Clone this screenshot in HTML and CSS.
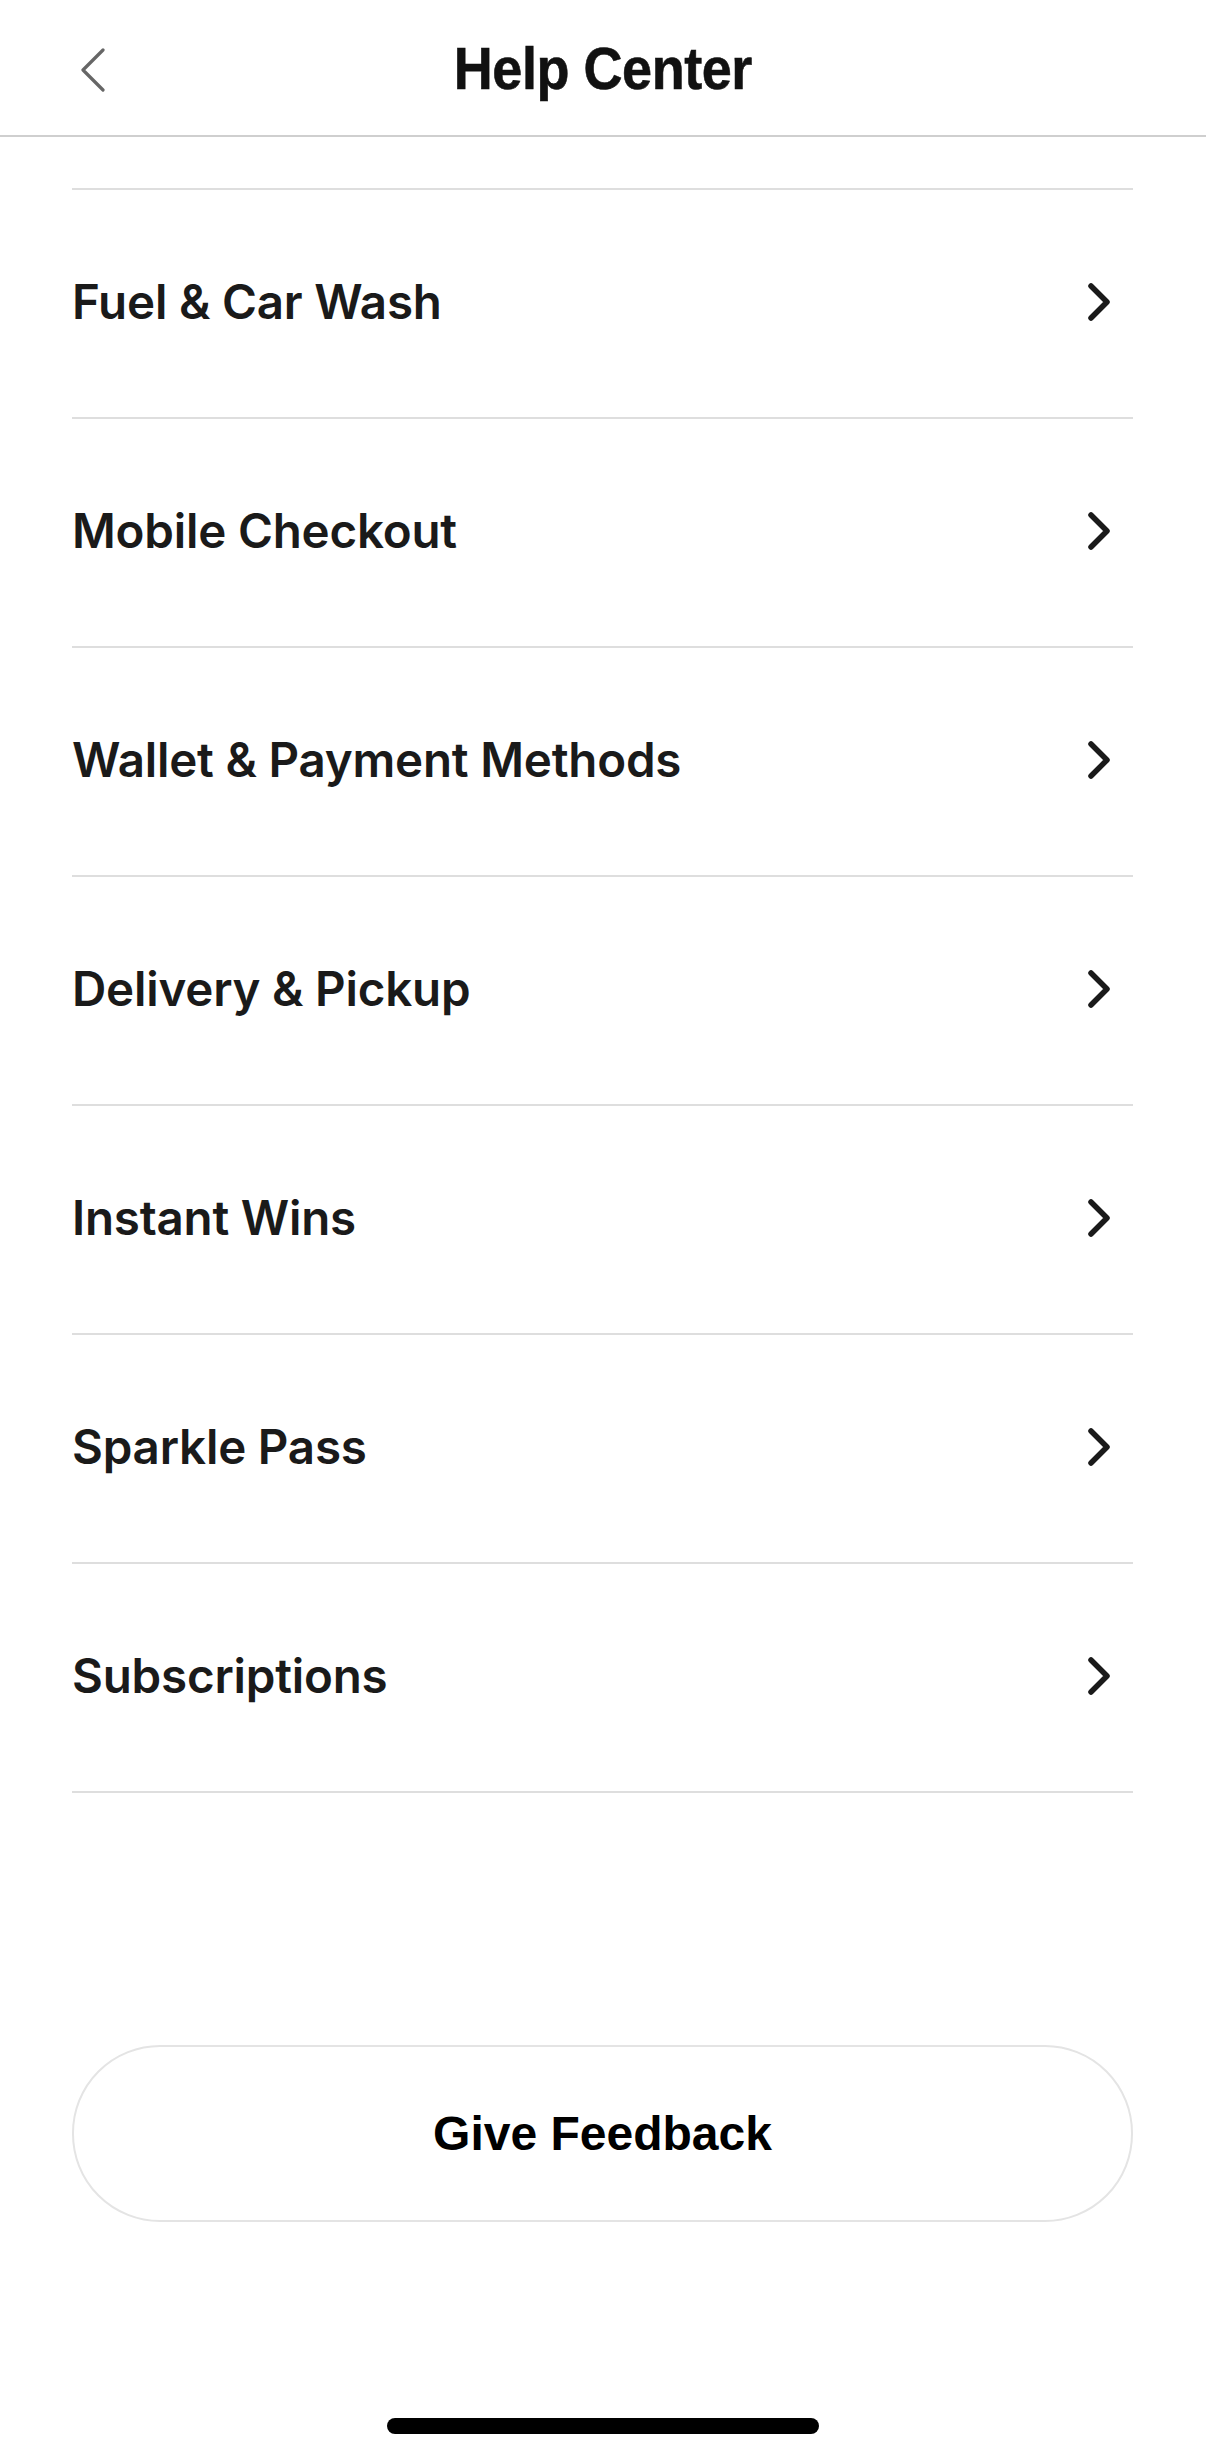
FILE: index.html
```html
<!DOCTYPE html>
<html lang="en">
<head>
<meta charset="utf-8">
<title>Help Center</title>
<link rel="stylesheet" href="styles.css">
</head>
<body>
<div class="screen">
  <header class="topbar">
    <button class="back" aria-label="Back">
      <svg width="26" height="44" viewBox="0 0 26 44"><polyline points="23,2 3,22 23,42" fill="none" stroke="#666" stroke-width="3.2" stroke-linecap="round" stroke-linejoin="round"/></svg>
    </button>
    <h1 class="title"><span>Help Center</span></h1>
    <div class="spacer"></div>
  </header>

  <ul class="list">
    <li class="row"><span class="label">Fuel &amp; Car Wash</span><svg class="chev" width="24" height="40" viewBox="0 0 24 40"><polyline points="4,4 20,20 4,36" fill="none" stroke="#1a1a1a" stroke-width="5.5" stroke-linecap="round" stroke-linejoin="round"/></svg></li>
    <li class="row"><span class="label">Mobile Checkout</span><svg class="chev" width="24" height="40" viewBox="0 0 24 40"><polyline points="4,4 20,20 4,36" fill="none" stroke="#1a1a1a" stroke-width="5.5" stroke-linecap="round" stroke-linejoin="round"/></svg></li>
    <li class="row"><span class="label">Wallet &amp; Payment Methods</span><svg class="chev" width="24" height="40" viewBox="0 0 24 40"><polyline points="4,4 20,20 4,36" fill="none" stroke="#1a1a1a" stroke-width="5.5" stroke-linecap="round" stroke-linejoin="round"/></svg></li>
    <li class="row"><span class="label">Delivery &amp; Pickup</span><svg class="chev" width="24" height="40" viewBox="0 0 24 40"><polyline points="4,4 20,20 4,36" fill="none" stroke="#1a1a1a" stroke-width="5.5" stroke-linecap="round" stroke-linejoin="round"/></svg></li>
    <li class="row"><span class="label">Instant Wins</span><svg class="chev" width="24" height="40" viewBox="0 0 24 40"><polyline points="4,4 20,20 4,36" fill="none" stroke="#1a1a1a" stroke-width="5.5" stroke-linecap="round" stroke-linejoin="round"/></svg></li>
    <li class="row"><span class="label">Sparkle Pass</span><svg class="chev" width="24" height="40" viewBox="0 0 24 40"><polyline points="4,4 20,20 4,36" fill="none" stroke="#1a1a1a" stroke-width="5.5" stroke-linecap="round" stroke-linejoin="round"/></svg></li>
    <li class="row"><span class="label">Subscriptions</span><svg class="chev" width="24" height="40" viewBox="0 0 24 40"><polyline points="4,4 20,20 4,36" fill="none" stroke="#1a1a1a" stroke-width="5.5" stroke-linecap="round" stroke-linejoin="round"/></svg></li>
  </ul>

  <div class="actions">
    <button class="feedback">Give Feedback</button>
  </div>

  <div class="home-bar"><div class="home-indicator"></div></div>
</div>
</body>
</html>
```

FILE: styles.css
```css
* { box-sizing: border-box; }
html, body {
  margin: 0;
  padding: 0;
  background: #ffffff;
}
.screen {
  width: 1206px;
  height: 2458px;
  display: flex;
  flex-direction: column;
  background: #ffffff;
  color: #1a1a1a;
  font-family: "Inter", "Liberation Sans", sans-serif;
}
.topbar {
  height: 137px;
  flex: none;
  display: grid;
  grid-template-columns: 1fr auto 1fr;
  align-items: center;
  border-bottom: 2px solid #cfcfcf;
  padding: 0 80px;
}
.back {
  justify-self: start;
  background: none;
  border: 0;
  padding: 0;
  margin-top: 5px;
  display: flex;
}
.title {
  margin: 0;
  font-family: "Liberation Sans", Arial, sans-serif;
  font-weight: 700;
  font-size: 59px;
  line-height: 1;
  color: #111;
  margin-top: 4px;
}
.title span {
  display: inline-block;
  transform: scaleX(0.915);
  letter-spacing: -0.5px;
  -webkit-text-stroke: 0.6px #111;
}
.list {
  list-style: none;
  margin: 51px 73px 0 72px;
  padding: 0;
  flex: none;
}
.row {
  height: 229px;
  border-top: 2px solid #dedede;
  display: flex;
  align-items: center;
  justify-content: space-between;
  padding: 0 22px 0 0;
}
.row:last-child {
  border-bottom: 2px solid #dedede;
  height: 231px;
}
.label {
  font-size: 47.5px;
  font-weight: 600;
  letter-spacing: -0.2px;
  color: #1a1a1a;
  margin-top: -5px;
}
.chev { display: block; margin-top: -4px; }
.actions {
  flex: none;
  padding: 0 73px 0 72px;
  margin-top: 252px;
}
.feedback {
  width: 100%;
  height: 177px;
  border: 2px solid #e4e4e4;
  border-radius: 88px;
  background: #fff;
  font-family: "Liberation Sans", Arial, sans-serif;
  font-weight: 700;
  font-size: 48px;
  color: #000;
  padding: 0;
}
.home-bar {
  flex: 1;
  display: flex;
  align-items: flex-end;
  justify-content: center;
  padding-bottom: 24px;
}
.home-indicator {
  width: 432px;
  height: 16px;
  border-radius: 8px;
  background: #000;
}
```
